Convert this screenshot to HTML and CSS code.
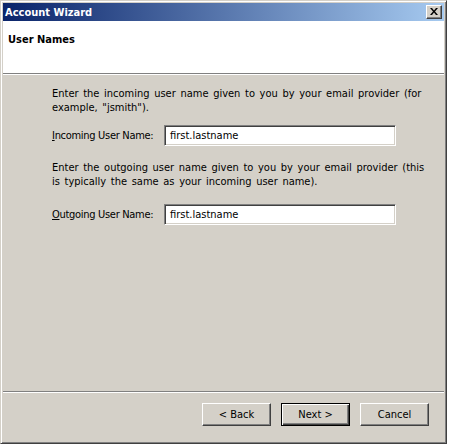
FILE: index.html
```html
<!DOCTYPE html>
<html>
<head>
<meta charset="utf-8">
<link rel="stylesheet" href="styles.css">
</head>
<body>
<div class="window">
  <div class="titlebar">
    <span class="title">Account Wizard</span>
    <span class="close"><svg width="8" height="7" viewBox="0 0 8 7"><path d="M0 0h2l2 2.5L6 0h2L5 3.5 8 7H6L4 4.5 2 7H0l3-3.5z" fill="#000"/></svg></span>
  </div>
  <div class="header">
    <div class="heading">User Names</div>
  </div>
  <div class="sep"></div>
  <div class="content">
    <p class="desc">Enter the incoming user name given to you by your email provider (for example, "jsmith").</p>
    <div class="field">
      <label class="label"><u>I</u>ncoming User Name:</label>
      <div class="input">first.lastname</div>
    </div>
    <p class="desc second">Enter the outgoing user name given to you by your email provider (this is typically the same as your incoming user name).</p>
    <div class="field field2">
      <label class="label"><u>O</u>utgoing User Name:</label>
      <div class="input">first.lastname</div>
    </div>
  </div>
  <div class="sep"></div>
  <div class="buttons">
    <button class="btn">&lt; Back</button>
    <button class="btn default">Next &gt;</button>
    <button class="btn cancel">Cancel</button>
  </div>
</div>
</body>
</html>
```

FILE: styles.css
```css
html, body {
  margin: 0;
  padding: 0;
  background: #ffffff;
}
body {
  font-family: "DejaVu Sans Condensed", "DejaVu Sans", sans-serif;
  font-size: 11px;
  color: #000;
}
.window {
  box-sizing: border-box;
  width: 447px;
  height: 444px;
  background: #d4d0c8;
  border-top: 1px solid #d4d0c8;
  border-left: 1px solid #d4d0c8;
  border-right: 1px solid #404040;
  border-bottom: 1px solid #404040;
  box-shadow: inset 1px 1px 0 #ffffff, inset -1px -1px 0 #808080;
  padding: 2px 2px 2px 2px;
  display: flex;
  flex-direction: column;
}
.titlebar {
  height: 18px;
  flex: none;
  background: linear-gradient(to right, #0a246a, #a6caf0);
  display: flex;
  align-items: center;
  justify-content: space-between;
  padding: 0 2px 0 2px;
}
.title {
  color: #fff;
  font-weight: bold;
  font-size: 11px;
}
.close {
  box-sizing: border-box;
  width: 16px;
  height: 14px;
  background: #d4d0c8;
  border-top: 1px solid #ffffff;
  border-left: 1px solid #ffffff;
  border-right: 1px solid #404040;
  border-bottom: 1px solid #404040;
  box-shadow: inset -1px -1px 0 #808080;
  display: flex;
  align-items: center;
  justify-content: center;
  padding-bottom: 1px;
}
.header {
  height: 52px;
  flex: none;
  background: #fff;
  padding: 12px 0 0 5px;
  box-sizing: border-box;
}
.heading {
  font-weight: bold;
  font-size: 11px;
}
.sep {
  flex: none;
  height: 1px;
  background: #808080;
  border-bottom: 1px solid #ffffff;
}
.content {
  flex: 1;
  padding: 12px 0 0 49px;
}
.desc {
  margin: 0;
  line-height: 14px;
  width: 378px;
  word-spacing: 1.5px;
}
.second {
  margin-top: 15px;
}
.field {
  display: flex;
  align-items: center;
  margin-top: 10px;
}
.field2 {
  margin-top: 15px;
}
.label {
  width: 112px;
  letter-spacing: -0.3px;
}
.input {
  box-sizing: border-box;
  width: 232px;
  height: 21px;
  background: #fff;
  border-top: 1px solid #808080;
  border-left: 1px solid #808080;
  border-right: 1px solid #ffffff;
  border-bottom: 1px solid #ffffff;
  box-shadow: inset 1px 1px 0 #404040, inset -1px -1px 0 #d4d0c8;
  padding: 2px 4px 0 5px;
  line-height: 16px;
}
.buttons {
  flex: none;
  height: 48px;
  display: flex;
  justify-content: flex-end;
  align-items: flex-start;
  padding: 10px 15px 0 0;
  box-sizing: border-box;
  gap: 10px;
}
.btn {
  box-sizing: border-box;
  width: 69px;
  height: 23px;
  background: #d4d0c8;
  font-family: "DejaVu Sans Condensed", "DejaVu Sans", sans-serif;
  font-size: 11px;
  color: #000;
  border-top: 1px solid #ffffff;
  border-left: 1px solid #ffffff;
  border-right: 1px solid #404040;
  border-bottom: 1px solid #404040;
  box-shadow: inset -1px -1px 0 #808080;
  padding: 0;
  margin: 0;
}
.btn.default {
  border: 1px solid #000;
  box-shadow: inset 1px 1px 0 #ffffff, inset -1px -1px 0 #404040, inset -2px -2px 0 #808080;
}
```
